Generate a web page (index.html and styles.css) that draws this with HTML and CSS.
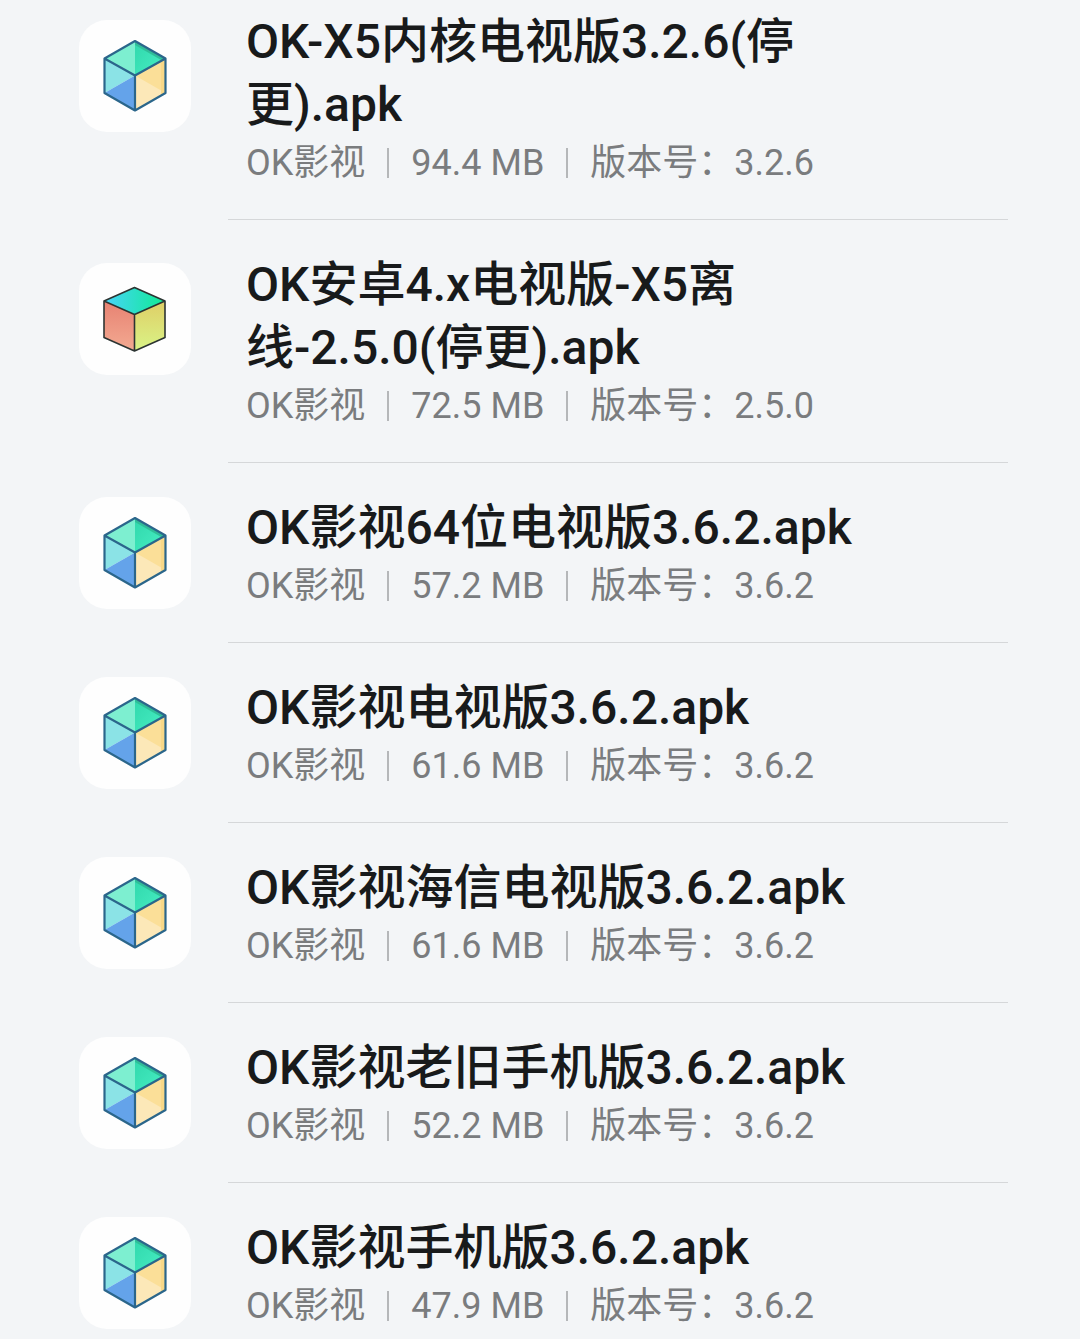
FILE: index.html
```html
<!DOCTYPE html>
<html lang="zh-CN">
<head>
<meta charset="utf-8">
<meta name="viewport" content="width=device-width, initial-scale=1">
<title>安装包</title>
<link rel="stylesheet" href="styles.css">
</head>
<body>
<svg class="defs" aria-hidden="true">
  <defs>
    <linearGradient id="top-right" x1="0" y1="0" x2="1" y2="1"><stop offset="0" stop-color="#30d8ac"/><stop offset="1" stop-color="#48eec4"/></linearGradient>
    <linearGradient id="old-top" x1="0" y1="0" x2="1" y2="0"><stop offset="0" stop-color="#48d4fa"/><stop offset="1" stop-color="#10eb94"/></linearGradient>
    <linearGradient id="old-left" x1="0" y1="0" x2="0" y2="1"><stop offset="0" stop-color="#e78272"/><stop offset="1" stop-color="#f3aa92"/></linearGradient>
    <linearGradient id="old-right" x1="0" y1="0" x2="0" y2="1"><stop offset="0" stop-color="#dfce66"/><stop offset="1" stop-color="#d9f487"/></linearGradient>
  </defs>
  <symbol id="cube" viewBox="0 0 112 112">
    <path d="M56 21 25.500 38.500 56 55.500z" fill="#7defd0"/>
    <path d="M56 21 86.500 38.500 56 55.500z" fill="url(#top-right)"/>
    <path d="M56 21 86.500 38.500 83 40.500 56 25z" fill="#2fbd98"/>
    <path d="M25.500 38.500 56 55.500 25.500 73z" fill="#8be3e6"/>
    <path d="M56 55.500V90.500L25.500 73z" fill="#64a3ea"/>
    <path d="M56 55.500 86.500 38.500V73L56 90.500z" fill="#fce8b8"/>
    <path d="M56 55.500 86.500 38.500V73z" fill="#fbdf98"/>
    <path d="M82 41 86.500 38.500V73L82 75.500z" fill="#f8d888"/>
    <path d="M56 21 86.500 38.500V73L56 90.500 25.500 73V38.500zM25.500 38.500 56 55.500 86.500 38.500M56 55.500V90.500" fill="none" stroke="#2b668b" stroke-width="2.200" stroke-linejoin="round"/>
  </symbol>
  <symbol id="cube-old" viewBox="0 0 112 112">
    <path d="M55.500 24.500 86 38 55.500 51.500 25 38z" fill="url(#old-top)"/>
    <path d="M25 38 55.500 51.500V88L25 74.500z" fill="url(#old-left)"/>
    <path d="M55.500 51.500 86 38V74.500L55.500 88z" fill="url(#old-right)"/>
    <path d="M55.500 24.500 86 38V74.500L55.500 88 25 74.500V38zM25 38 55.500 51.500 86 38M55.500 51.500V88" fill="none" stroke="#2c3432" stroke-width="1.600" stroke-linejoin="round"/>
  </symbol>
</svg>
<main>
  <ul class="files">
    <li class="file file-tall">
      <svg class="icon"><use href="#cube"/></svg>
      <div class="info">
        <h2 class="name">OK-X5内核电视版3.2.6(停更).apk</h2>
        <p class="meta"><span>OK影视</span><span>94.4 MB</span><span>版本号：3.2.6</span></p>
      </div>
    </li>
    <li class="file file-tall">
      <svg class="icon"><use href="#cube-old"/></svg>
      <div class="info">
        <h2 class="name">OK安卓4.x电视版-X5离线-2.5.0(停更).apk</h2>
        <p class="meta"><span>OK影视</span><span>72.5 MB</span><span>版本号：2.5.0</span></p>
      </div>
    </li>
    <li class="file">
      <svg class="icon"><use href="#cube"/></svg>
      <div class="info">
        <h2 class="name">OK影视64位电视版3.6.2.apk</h2>
        <p class="meta"><span>OK影视</span><span>57.2 MB</span><span>版本号：3.6.2</span></p>
      </div>
    </li>
    <li class="file">
      <svg class="icon"><use href="#cube"/></svg>
      <div class="info">
        <h2 class="name">OK影视电视版3.6.2.apk</h2>
        <p class="meta"><span>OK影视</span><span>61.6 MB</span><span>版本号：3.6.2</span></p>
      </div>
    </li>
    <li class="file">
      <svg class="icon"><use href="#cube"/></svg>
      <div class="info">
        <h2 class="name">OK影视海信电视版3.6.2.apk</h2>
        <p class="meta"><span>OK影视</span><span>61.6 MB</span><span>版本号：3.6.2</span></p>
      </div>
    </li>
    <li class="file">
      <svg class="icon"><use href="#cube"/></svg>
      <div class="info">
        <h2 class="name">OK影视老旧手机版3.6.2.apk</h2>
        <p class="meta"><span>OK影视</span><span>52.2 MB</span><span>版本号：3.6.2</span></p>
      </div>
    </li>
    <li class="file">
      <svg class="icon"><use href="#cube"/></svg>
      <div class="info">
        <h2 class="name">OK影视手机版3.6.2.apk</h2>
        <p class="meta"><span>OK影视</span><span>47.9 MB</span><span>版本号：3.6.2</span></p>
      </div>
    </li>
  </ul>
</main>
</body>
</html>
```
FILE: styles.css
```css
* {
  box-sizing: border-box;
}

body {
  margin: 0;
  background: #f3f5f7;
  color: #181a1b;
  font-family: Roboto, "Noto Sans CJK SC", sans-serif;
}

/* Kept rendered, at no size, so that the gradients stay usable. */
.defs {
  position: absolute;
  width: 0;
  height: 0;
}

.files {
  margin: 0;
  padding: 0 72px 0 79px;
  list-style: none;
}

.file {
  display: flex;
  gap: 37px;
}

.icon {
  flex: none;
  width: 112px;
  height: 112px;
  margin-top: 34px;
  border-radius: 28px;
  background: #fefefe;
}

.file-tall .icon {
  margin-top: 43px;
}

.info {
  flex: 1;
  min-width: 0;
  padding: 33px 108px 29px 18px;
  border-bottom: 1px solid #d5d7d9;
}

.file:first-child .info {
  padding-top: 10px;
}

.file:first-child .icon {
  margin-top: 20px;
}

.file:last-child .info {
  padding-bottom: 6px;
  border-bottom: 0;
}

.name {
  margin: 0;
  font-size: 48px;
  font-weight: 500;
  line-height: 63px;
}

.meta {
  display: flex;
  align-items: center;
  margin: 0;
  color: #7a7c7e;
  font-size: 36px;
  font-weight: 400;
  line-height: 54px;
  white-space: nowrap;
}

.meta span {
  display: flex;
  align-items: center;
}

.meta span + span::before {
  content: "";
  width: 2px;
  height: 30px;
  margin: 0 22px;
  background: #b5b7b9;
}
```
